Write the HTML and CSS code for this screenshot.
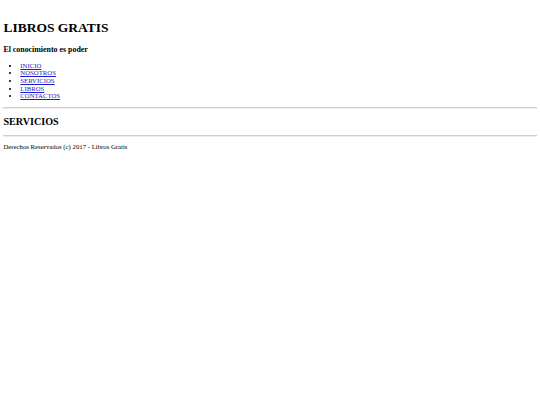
FILE: index.html
```html
<!DOCTYPE html>
<html lang="es">
<head>
<meta charset="utf-8">
<title>Libros Gratis</title>
<link rel="stylesheet" href="styles.css">
</head>
<body class="page">
<header class="site-header">
<h1 class="title">LIBROS GRATIS</h1>
<h3 class="tagline">El conocimiento es poder</h3>
<nav class="nav">
<ul class="menu">
<li><a href="#">INICIO</a></li>
<li><a href="#">NOSOTROS</a></li>
<li><a href="#">SERVICIOS</a></li>
<li><a href="#">LIBROS</a></li>
<li><a href="#">CONTACTOS</a></li>
</ul>
</nav>
</header>
<hr class="rule rule-top">
<section class="content">
<h2 class="section-title">SERVICIOS</h2>
</section>
<hr class="rule rule-bottom">
<footer class="footer">
<p class="copy">Derechos Reservados (c) 2017 - Libros Gratis</p>
</footer>
</body>
</html>
```
FILE: styles.css
```css
html {
  background: #fff;
}
.page {
  margin: 0;
  padding: 0 3.4px;
  font-family: "Liberation Serif", "Times New Roman", serif;
  font-size: 6.75px;
  line-height: 7.65px;
  color: #000;
  background: #fff;
}
.title {
  margin: 19.9px 0 0;
  font-size: 13.5px;
  line-height: 15.5px;
  font-weight: bold;
}
.tagline {
  margin: 9.6px 0 0;
  font-size: 7.9px;
  line-height: 9.1px;
  font-weight: bold;
}
.menu {
  margin: 7.5px 0 0;
  padding-left: 16.9px;
  list-style: disc;
}
.menu li {
  line-height: 7.65px;
}
.menu a {
  color: #1a1acc;
  text-decoration: underline;
}
.rule {
  height: 0;
  margin: 0;
  border: 0;
  border-top: 1px solid #cfcfcf;
  border-bottom: 1px solid #ececec;
}
.rule-top {
  margin-top: 7.6px;
}
.section-title {
  margin: 6.5px 0 0;
  font-size: 10.125px;
  line-height: 11.6px;
  font-weight: bold;
}
.rule-bottom {
  margin-top: 7.9px;
}
.copy {
  margin: 5.6px 0 0;
  font-size: 6.75px;
  line-height: 7.65px;
}
```
